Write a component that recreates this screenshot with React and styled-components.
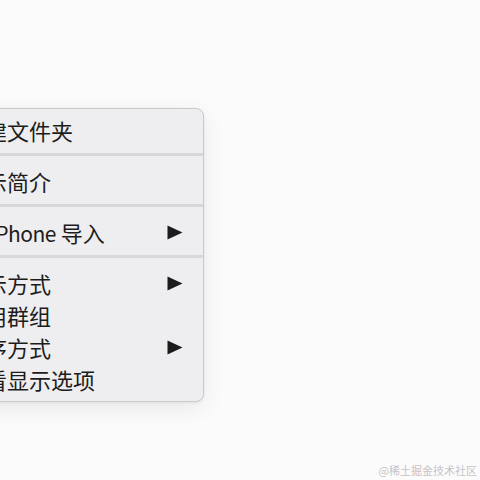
import React from 'react';
import styled, { createGlobalStyle } from 'styled-components';

const COLORS = {
  page: '#fcfbfc',
  menu: '#eeedef',
  border: '#cbc9cb',
  separator: '#d9d7d9',
  text: '#1c1c1c',
  watermark: '#c6c4c6',
};

const GlobalStyle = createGlobalStyle`
  html, body {
    margin: 0;
    padding: 0;
    background: ${COLORS.page};
  }
  body {
    font-family: "Noto Sans CJK SC", "Noto Sans", sans-serif;
    overflow: hidden;
  }
`;

const SECTIONS = [
  [{ label: '新建文件夹' }],
  [{ label: '显示简介' }],
  [{ label: ['从 ', 'iPhone', ' 导入'], submenu: true }],
  [
    { label: '显示方式', submenu: true },
    { label: '使用群组' },
    { label: '排序方式', submenu: true },
    { label: '查看显示选项' },
  ],
];

const Arrow = () => (
  <svg width="16" height="15" viewBox="0 0 16 15" aria-hidden="true">
    <polygon points="0.5,0.5 15.5,7.5 0.5,14.5" fill="currentColor" />
  </svg>
);

const renderLabel = (label) =>
  Array.isArray(label) ? (
    <>
      {label[0]}
      <Latin>{label[1]}</Latin>
      {label[2]}
    </>
  ) : (
    label
  );

const App = () => {
  return (
    <Page>
      <GlobalStyle />
      <Menu>
        {SECTIONS.map((items, i) => (
          <React.Fragment key={i}>
            {i > 0 && <Separator />}
            {items.map((item, j) => (
              <Item key={j}>
                <Label>{renderLabel(item.label)}</Label>
                {item.submenu && <Arrow />}
              </Item>
            ))}
          </React.Fragment>
        ))}
      </Menu>
      <Watermark>@稀土掘金技术社区</Watermark>
    </Page>
  );
};

const Page = styled.div`
  display: flex;
  flex-direction: column;
  align-items: flex-start;
  width: 480px;
  height: 480px;
  padding-top: 108px;
  box-sizing: border-box;
  overflow: hidden;
`;

const Menu = styled.div`
  width: 254px;
  margin-left: -50px;
  padding: 5px 0 6px;
  box-sizing: border-box;
  background: ${COLORS.menu};
  border: 1px solid ${COLORS.border};
  border-radius: 8px;
  box-shadow: 0 6px 22px rgba(0, 0, 0, 0.08), 0 1px 3px rgba(0, 0, 0, 0.06);
  color: ${COLORS.text};
`;

const Item = styled.div`
  display: flex;
  align-items: center;
  justify-content: space-between;
  height: 32px;
  padding: 0 20px 0 12px;
`;

const Label = styled.span`
  font-size: 22px;
  font-weight: 400;
  line-height: 32px;
  white-space: nowrap;
`;

const Latin = styled.span`
  font-size: 21px;
  letter-spacing: -0.5px;
`;

const Separator = styled.div`
  height: 3px;
  margin: 7px 0 9px;
  background: ${COLORS.separator};
`;

const Watermark = styled.div`
  align-self: flex-end;
  margin-top: auto;
  margin-bottom: 2px;
  padding-right: 3px;
  font-size: 11px;
  line-height: 16px;
  color: ${COLORS.watermark};
  font-family: "Noto Sans CJK SC", sans-serif;
`;

export default App;
